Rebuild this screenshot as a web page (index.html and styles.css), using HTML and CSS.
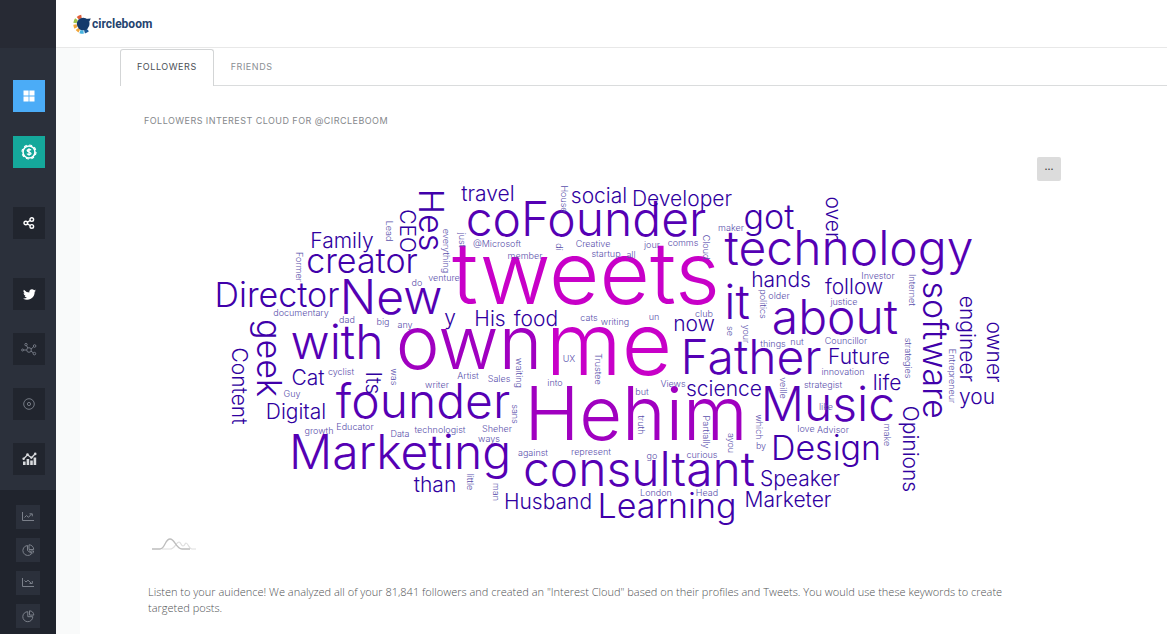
FILE: index.html
```html
<!DOCTYPE html>
<html lang="en">
<head>
    <meta charset="UTF-8">
    <meta name="viewport" content="width=device-width, initial-scale=1">
    <title>Circleboom - Interest Cloud</title>
    <link rel="stylesheet" href="styles.css">
</head>
<body>

<nav class="sidebar" aria-label="Main menu">
    <div class="sidebar-head"></div>
    <div class="menu">
        <div class="menu-group menu-top">
            <a href="#" class="tile tile-blue" aria-label="Dashboard">
                <svg width="12" height="12" viewBox="0 0 12 12" fill="#fff"><path d="M.5.5h5.100v5.100H.5zM6.400.5h5.100v5.100H6.400zM.5 6.400h5.100v5.100H.5zM6.400 6.400h5.100v5.100H6.400z"/></svg>
            </a>
            <a href="#" class="tile tile-green" aria-label="Pricing">
                <svg width="16" height="16" viewBox="0 0 16 16" fill="none" stroke="#fff">
                    <circle cx="8" cy="8" r="6" stroke-width="1.6"/>
                    <circle cx="8" cy="8" r="7" stroke-width="1.2" stroke-dasharray="3 2.5"/>
                    <path d="M10 6.200C9.600 5.400 6.200 5 6.200 6.600S10 7.800 10 9.400 6.400 10.700 6 9.600M8 4.200v7.600" stroke-width="1.300"/>
                </svg>
            </a>
        </div>
        <a href="#" class="tile" aria-label="Share">
            <svg width="12" height="12" viewBox="0 0 12 12" fill="none" stroke="#fff" stroke-width="1.4">
                <circle cx="2.8" cy="6" r="1.800"/><circle cx="8.800" cy="2.600" r="1.800"/><circle cx="8.800" cy="9.400" r="1.800"/>
                <path d="M4.400 5.200l2.800-1.700M4.400 6.800l2.800 1.700"/>
            </svg>
        </a>
        <div class="menu-group">
            <a href="#" class="tile" aria-label="Twitter">
                <svg width="13" height="13" viewBox="0 0 24 24" fill="#fff"><path d="M24 4.600a10 10 0 0 1-2.800.8 5 5 0 0 0 2.100-2.700 10 10 0 0 1-3.100 1.200 4.900 4.900 0 0 0-8.400 4.500A14 14 0 0 1 1.700 3.200a4.900 4.900 0 0 0 1.500 6.500 5 5 0 0 1-2.200-.6 4.900 4.900 0 0 0 3.900 4.900 5 5 0 0 1-2.200.1 4.900 4.900 0 0 0 4.600 3.400A10 10 0 0 1 0 19.500a14 14 0 0 0 21.500-12.400A10 10 0 0 0 24 4.600z"/></svg>
            </a>
            <a href="#" class="tile" aria-label="Network">
                <svg width="16" height="14" viewBox="0 0 16 14" fill="none" stroke="#747984" stroke-width="1">
                    <circle cx="8" cy="8" r="2.300"/><circle cx="1.600" cy="8" r="1"/><circle cx="5" cy="2.600" r="1.200"/><circle cx="13.600" cy="4" r="1.300"/><circle cx="13.400" cy="11.600" r="1.300"/>
                    <path d="M2.600 8h3M5.600 3.700l1.200 2.300M10 7l2.400-2M10 9.200l2.300 1.600"/>
                </svg>
            </a>
            <a href="#" class="tile" aria-label="Target">
                <svg width="12" height="12" viewBox="0 0 12 12" fill="none" stroke="#7d828c" stroke-width="0.900"><circle cx="6" cy="6" r="5.300"/><circle cx="6" cy="6" r="1.600"/></svg>
            </a>
            <a href="#" class="tile" aria-label="Analytics">
                <svg width="15" height="14" viewBox="0 0 15 14" fill="#d8dadd">
                    <path d="M1 9.500h2.600V13H1zM4.600 7h2.600v6H4.600zM8.200 8.500h2.600V13H8.200zM11.600 5.500h2.600V13h-2.600z"/>
                    <path d="M1.500 7l4-4.200 4 3L13 2" fill="none" stroke="#d8dadd" stroke-width="1.300"/>
                    <circle cx="5.500" cy="2.600" r="1.300"/><circle cx="9.300" cy="5.600" r="1.200"/><circle cx="13.200" cy="1.900" r="1.300"/><circle cx="1.600" cy="6.800" r="1.200"/>
                </svg>
            </a>
        </div>
    </div>
    <div class="submenu">
        <a href="#" class="tile tile-small" aria-label="Growth">
            <svg width="12" height="10" viewBox="0 0 12 10"><path d="M.5 0v8.500H12M2.500 5.500l2-2 2 1.800 3-3.300M7.500 1.800h2.800v2.500"/></svg>
        </a>
        <a href="#" class="tile tile-small" aria-label="Segments">
            <svg width="13" height="13" viewBox="0 0 13 13"><path d="M5.500 1.500a5 5 0 1 0 4.200 8.200L5.500 6.500zM7 .8v4.700h4.700A4.700 4.700 0 0 0 7 .8zM7 6.500l3 2.500M8.500 7h3.200l-1 2.500"/></svg>
        </a>
        <a href="#" class="tile tile-small" aria-label="Decline">
            <svg width="12" height="10" viewBox="0 0 12 10"><path d="M.5 0v8.500H12M2.500 2.500l1.500 1.500 2-1.800 3.500 3.300M7.500 5.500h2.800V3"/></svg>
        </a>
        <a href="#" class="tile tile-small" aria-label="Share of voice">
            <svg width="13" height="13" viewBox="0 0 13 13"><path d="M5.800 1.700a5 5 0 1 0 5 5h-5zM7.500.8v4.300h4.300A4.300 4.300 0 0 0 7.500.8z"/></svg>
        </a>
    </div>
</nav>

<div class="page">
    <header class="topbar">
        <a href="#" class="logo">
            <svg width="19" height="20" viewBox="0 0 19 20">
                <g fill="none" stroke-width="3.400">
                    <path d="M8.500 2.500a7.900 7.900 0 0 0-3.700 1.700" stroke="#e0603a"/>
                    <path d="M3.500 5.200A8 8 0 0 0 2 9" stroke="#9cc24a"/>
                    <path d="M2 10.500a8 8 0 0 0 1 3.300" stroke="#f0a63c"/>
                    <path d="M4 15a8 8 0 0 0 2.300 1.900" stroke="#f0a63c"/>
                    <path d="M7 17.600a8 8 0 0 0 3.600.4" stroke="#45b4e0"/>
                    <path d="M11.500 17.800a8 8 0 0 0 3.300-1.800" stroke="#1d5a96"/>
                </g>
                <circle cx="10.200" cy="10" r="6.300" fill="#153a6b"/>
                <path d="M12 5l5.800-.5-1.600 3.200z" fill="#153a6b"/>
            </svg>
            <span>circleboom</span>
        </a>
    </header>

    <main class="content">
        <div class="tabs">
            <a href="#" class="tab active">Followers</a>
            <a href="#" class="tab">Friends</a>
        </div>

        <section class="panel">
            <h1 class="panel-title">Followers interest cloud for @circleboom</h1>

            <div class="panel-tools">
                <button type="button" class="btn-more" aria-label="More">...</button>
            </div>

            <svg class="cloud" width="817" height="350" viewBox="194 181 817 350">
                <g class="c1">
                    <text x="586" y="304">tweets</text>
                    <text x="609" y="375">me</text>
                </g>
                <g class="c2">
                    <text x="469" y="369">own</text>
                    <text x="636" y="440">Hehim</text>
                </g>
                <g class="c3">
                    <text x="586" y="236">coFounder</text>
                    <text x="849" y="265">technology</text>
                    <text x="391" y="314">New</text>
                    <text x="737" y="319">it</text>
                    <text x="835" y="334">about</text>
                    <text x="337" y="359">with</text>
                    <text x="751" y="374">Father</text>
                    <text x="423" y="418">founder</text>
                    <text x="828" y="421">Music</text>
                    <text x="400" y="469">Marketing</text>
                    <text x="639" y="486">consultant</text>
                </g>
                <g class="c4">
                    <text x="362" y="273">creator</text>
                    <text x="277" y="307">Director</text>
                    <text x="769" y="229">got</text>
                    <text x="826" y="460">Design</text>
                    <text x="667" y="518">Learning</text>
                    <text transform="translate(419 220) rotate(90)">Hes</text>
                    <text transform="translate(257 358) rotate(90)">geek</text>
                    <text transform="translate(923 350) rotate(90)">software</text>
                </g>
                <g class="c5">
                    <text x="342" y="248">Family</text>
                    <text x="488" y="201">travel</text>
                    <text x="599" y="203">social</text>
                    <text x="682" y="206">Developer</text>
                    <text x="781" y="287">hands</text>
                    <text x="854" y="294">follow</text>
                    <text x="450" y="325">y</text>
                    <text x="490" y="326">His</text>
                    <text x="536" y="326">food</text>
                    <text x="694" y="331">now</text>
                    <text x="859" y="364">Future</text>
                    <text x="724" y="396">science</text>
                    <text x="887" y="390">life</text>
                    <text x="977" y="404">you</text>
                    <text x="308" y="385">Cat</text>
                    <text x="296" y="419">Digital</text>
                    <text x="435" y="492">than</text>
                    <text x="548" y="509">Husband</text>
                    <text x="800" y="486">Speaker</text>
                    <text x="788" y="507">Marketer</text>
                    <text transform="translate(400 231) rotate(90)">CEO</text>
                    <text transform="translate(826 218) rotate(90)">over</text>
                    <text transform="translate(366 383) rotate(90)">Its</text>
                    <text transform="translate(232 386) rotate(90)">Content</text>
                    <text transform="translate(960 339) rotate(90)">engineer</text>
                    <text transform="translate(987 352) rotate(90)">owner</text>
                    <text transform="translate(903 449) rotate(90)">Opinions</text>
                </g>
                <g class="c6">
                    <text x="497" y="247">@Microsoft</text>
                    <text x="593" y="247">Creative</text>
                    <text x="525" y="259">member</text>
                    <text x="606" y="257">startup</text>
                    <text x="631" y="258">all</text>
                    <text x="652" y="248">jour</text>
                    <text x="683" y="246">comms</text>
                    <text x="731" y="231">maker</text>
                    <text x="417" y="286">do</text>
                    <text x="444" y="281">venture</text>
                    <text x="301" y="316">documentary</text>
                    <text x="347" y="323">dad</text>
                    <text x="383" y="325">big</text>
                    <text x="405" y="328">any</text>
                    <text x="589" y="321">cats</text>
                    <text x="615" y="325">writing</text>
                    <text x="654" y="320">un</text>
                    <text x="704" y="317">club</text>
                    <text x="779" y="299">older</text>
                    <text x="878" y="279">Investor</text>
                    <text x="844" y="305">justice</text>
                    <text x="773" y="347">things</text>
                    <text x="797" y="345">nut</text>
                    <text x="846" y="344">Councillor</text>
                    <text x="843" y="375">innovation</text>
                    <text x="823" y="388">strategist</text>
                    <text x="826" y="410">like</text>
                    <text x="806" y="432">love</text>
                    <text x="833" y="433">Advisor</text>
                    <text x="341" y="375">cyclist</text>
                    <text x="292" y="397">Guy</text>
                    <text x="437" y="388">writer</text>
                    <text x="468" y="379">Artist</text>
                    <text x="499" y="382">Sales</text>
                    <text x="569" y="362">UX</text>
                    <text x="555" y="386">into</text>
                    <text x="642" y="395">but</text>
                    <text x="673" y="387">Views</text>
                    <text x="319" y="434">growth</text>
                    <text x="355" y="430">Educator</text>
                    <text x="400" y="437">Data</text>
                    <text x="440" y="433">technologist</text>
                    <text x="497" y="432">Sheher</text>
                    <text x="489" y="442">ways</text>
                    <text x="533" y="456">against</text>
                    <text x="591" y="455">represent</text>
                    <text x="652" y="459">go</text>
                    <text x="702" y="458">curious</text>
                    <text x="761" y="449">by</text>
                    <text x="656" y="496">London</text>
                    <text x="707" y="496">Head</text>
                    <text transform="translate(561 199) rotate(90)">House</text>
                    <text transform="translate(386 231) rotate(90)">Lead</text>
                    <text transform="translate(296 267) rotate(90)">Former</text>
                    <text transform="translate(443 251) rotate(90)">everything</text>
                    <text transform="translate(459 240) rotate(90)">just</text>
                    <text transform="translate(556 247) rotate(90)">di</text>
                    <text transform="translate(703 247) rotate(90)">Cloud</text>
                    <text transform="translate(760 304) rotate(90)">politics</text>
                    <text transform="translate(909 290) rotate(90)">Internet</text>
                    <text transform="translate(727 331) rotate(90)">se</text>
                    <text transform="translate(743 334) rotate(90)">your</text>
                    <text transform="translate(905 358) rotate(90)">strategies</text>
                    <text transform="translate(949 376) rotate(90)">Entrepreneur</text>
                    <text transform="translate(884 435) rotate(90)">make</text>
                    <text transform="translate(780 388) rotate(90)">veille</text>
                    <text transform="translate(756 427) rotate(90)">which</text>
                    <text transform="translate(703 432) rotate(90)">Partially</text>
                    <text transform="translate(728 443) rotate(90)">ayou</text>
                    <text transform="translate(516 373) rotate(90)">waiting</text>
                    <text transform="translate(595 369) rotate(90)">Trustee</text>
                    <text transform="translate(638 425) rotate(90)">truth</text>
                    <text transform="translate(512 414) rotate(90)">sans</text>
                    <text transform="translate(391 377) rotate(90)">was</text>
                    <text transform="translate(467 482) rotate(90)">little</text>
                    <text transform="translate(493 492) rotate(90)">man</text>
                </g>
            </svg>

            <svg class="chart-mark" width="44" height="14" viewBox="0 0 44 14" fill="none">
                <path d="M10 12h8c5 0 6-7 9-7 2 0 2 4 4 4s2-3 3-3c2 0 3 6 6 6h4" stroke="#dedede" stroke-width="1.200"/>
                <path d="M0 12h8c5 0 5-10 10-10s6 10 12 10h8" stroke="#bdbdbd" stroke-width="1.300"/>
            </svg>

            <p class="summary">Listen to your auidence! We analyzed all of your 81,841 followers and created an "Interest Cloud" based on their profiles and Tweets. You would use these keywords to create targeted posts.</p>
        </section>
    </main>
</div>

</body>
</html>
```
FILE: styles.css
```css
* {
    box-sizing: border-box;
}

body {
    margin: 0;
    min-height: 100vh;
    display: flex;
    background: #f9fafa;
    color: #505254;
    font-family: Inter, "Open Sans", sans-serif;
}

a {
    text-decoration: none;
    color: inherit;
}

/* sidebar */
.sidebar {
    flex: 0 0 56px;
    display: flex;
    flex-direction: column;
    background: #20242d;
}

.sidebar-head {
    height: 48px;
    background: #272a34;
}

.menu {
    display: flex;
    flex-direction: column;
    align-items: center;
    gap: 39px;
    padding: 32px 0 15px 2px;
    background: #2b303b;
}

.menu-group {
    display: flex;
    flex-direction: column;
    gap: 23px;
}

.menu-top {
    gap: 24px;
}

.submenu {
    display: flex;
    flex-direction: column;
    align-items: center;
    gap: 9px;
    padding: 15px 0 6px;
}

.tile {
    width: 32px;
    height: 32px;
    display: flex;
    align-items: center;
    justify-content: center;
    background: #21252e;
}

.tile-blue {
    background: #4bacf7;
}

.tile-green {
    background: #15a89b;
}

.tile-small {
    width: 24px;
    height: 24px;
    background: #2b303b;
}

.tile-small svg {
    fill: none;
    stroke: #7b808a;
}

/* header */
.page {
    flex: 1;
    min-width: 0;
    display: flex;
    flex-direction: column;
}

.topbar {
    height: 48px;
    display: flex;
    align-items: center;
    padding-left: 17px;
    background: #fff;
    border-bottom: 1px solid #e8e8e8;
}

.logo {
    display: flex;
    align-items: center;
    color: #24436f;
    font: 700 12px/20px Roboto, sans-serif;
}

/* content */
.content {
    flex: 1;
    margin-left: 24px;
    padding: 1px 0 0 40px;
    background: #fff;
}

.tabs {
    display: flex;
    border-bottom: 1px solid #dadcdd;
}

.tab {
    padding: 0 16px 2px;
    border: 1px solid transparent;
    border-bottom: 0;
    border-radius: 3px 3px 0 0;
    color: #8b8f94;
    font-size: 9px;
    line-height: 33px;
    letter-spacing: 0.06em;
    text-transform: uppercase;
}

.tab.active {
    margin-bottom: -1px;
    border-color: #d3d5d6;
    background: #fff;
    color: #4a4f55;
}

.panel {
    max-width: 941px;
    padding: 27px 0 16px 24px;
}

.panel-title {
    margin: 0;
    color: #85888c;
    font-size: 9px;
    font-weight: 400;
    line-height: 16px;
    letter-spacing: 0.05em;
    text-transform: uppercase;
}

.panel-tools {
    display: flex;
    justify-content: flex-end;
    padding-top: 28px;
}

.btn-more {
    width: 24px;
    height: 24px;
    padding: 0 0 4px;
    border: 0;
    border-radius: 2px;
    background: #dcdcdc;
    color: #444;
    font: 700 9px/16px Inter, sans-serif;
}

.cloud {
    display: block;
    max-width: 100%;
    margin: 0 auto;
}

.cloud text {
    text-anchor: middle;
    font-weight: 300;
}

.c1 { font-size: 87px; fill: #c800c8; }
.c2 { font-size: 74px; fill: #a000c0; }
.c3 { font-size: 48px; fill: #5500b4; }
.c4 { font-size: 34px; fill: #4000aa; }
.c5 { font-size: 21px; fill: #3000a0; }
.c6 { font-size: 9px; fill: #5a50ac; }

.chart-mark {
    display: block;
    margin: 6px 0 0 8px;
}

.summary {
    margin: 33px 20px 0 4px;
    font: 300 11px/16px "Open Sans", sans-serif;
}
```
